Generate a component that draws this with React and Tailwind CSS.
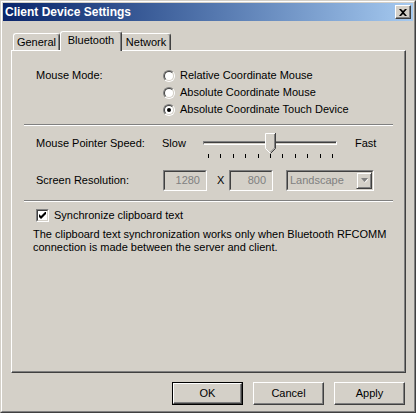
import React from "react";

function Radio({ checked }) {
  return (
    <div className="w-[12px] h-[12px] rounded-full border border-t-[#808080] border-l-[#808080] border-r-white border-b-white shrink-0">
      <div className="w-full h-full rounded-full border border-t-[#404040] border-l-[#404040] border-r-[#d4d0c8] border-b-[#d4d0c8] bg-white flex items-center justify-center">
        {checked && <div className="w-[4px] h-[4px] rounded-full bg-black" />}
      </div>
    </div>
  );
}

function Sunken({ className, children }) {
  return (
    <div className={`border border-t-[#808080] border-l-[#808080] border-r-white border-b-white ${className}`}>
      <div className="w-full h-full border border-t-[#404040] border-l-[#404040] border-r-[#d4d0c8] border-b-[#d4d0c8] flex items-center">
        {children}
      </div>
    </div>
  );
}

function Button({ label, isDefault }) {
  const inner = (
    <div className="w-full h-full border border-t-white border-l-white border-r-[#404040] border-b-[#404040] shadow-[inset_-1px_-1px_0_#808080] flex items-center justify-center">
      {label}
    </div>
  );
  return isDefault ? (
    <div className="w-[71px] h-[23px] border border-black">{inner}</div>
  ) : (
    <div className="w-[71px] h-[23px]">{inner}</div>
  );
}

export default function App() {
  const ticks = Array.from({ length: 11 });
  return (
    <div className="w-[416px] h-[413px] bg-[#d4d0c8] border border-t-[#d4d0c8] border-l-[#d4d0c8] border-r-[#404040] border-b-[#404040] font-['Liberation_Sans',Arial,sans-serif] text-[11px] text-black leading-none">
      <div className="h-full border border-t-white border-l-white border-r-[#808080] border-b-[#808080] p-[1px] flex flex-col">
        {/* Title bar */}
        <div className="h-[18px] shrink-0 flex items-center bg-gradient-to-r from-[#0a246a] to-[#a6caf0] pl-[2px] pr-[2px]">
          <span className="text-white font-bold text-[12px]">Client Device Settings</span>
          <div className="ml-auto w-[16px] h-[14px] bg-[#d4d0c8] border border-t-white border-l-white border-r-[#404040] border-b-[#404040] shadow-[inset_-1px_-1px_0_#808080] flex items-center justify-center">
            <svg width="8" height="7" viewBox="0 0 8 7">
              <path d="M0 0h2l2 2 2-2h2L5 3.5 8 7H6L4 5 2 7H0l3-3.5z" fill="#000" />
            </svg>
          </div>
        </div>

        {/* Tabs */}
        <div className="mt-[10px] ml-[10px] h-[19px] flex items-end relative z-10">
          <div className="w-[47px] h-[17px] border border-b-0 border-t-white border-l-white border-r-[#404040] shadow-[inset_-1px_0_0_#808080] rounded-t-[3px] flex items-center justify-center pt-[1px]">
            General
          </div>
          <div className="w-[62px] h-[20px] -mb-[1px] bg-[#d4d0c8] border border-b-0 border-t-white border-l-white border-r-[#404040] shadow-[inset_-1px_0_0_#808080] rounded-t-[3px] flex items-center justify-center pb-[2px]">
            Bluetooth
          </div>
          <div className="w-[49px] h-[17px] border border-b-0 border-l-0 border-t-white border-r-[#404040] shadow-[inset_-1px_0_0_#808080] rounded-tr-[3px] flex items-center justify-center pt-[1px]">
            Network
          </div>
        </div>

        {/* Panel */}
        <div className="ml-[8px] w-[395px] h-[323px] border border-t-white border-l-white border-r-[#404040] border-b-[#404040] shadow-[inset_-1px_-1px_0_#808080] flex flex-col">
          {/* Mouse mode */}
          <div className="mt-[16px] pl-[24px] flex">
            <div className="w-[127px] h-[17px] flex items-center">Mouse Mode:</div>
            <div className="flex flex-col">
              {[
                ["Relative Coordinate Mouse", false],
                ["Absolute Coordinate Mouse", false],
                ["Absolute Coordinate Touch Device", true],
              ].map(([t, c]) => (
                <div key={t} className="h-[17px] flex items-center gap-[5px]">
                  <Radio checked={c} />
                  <span>{t}</span>
                </div>
              ))}
            </div>
          </div>

          <div className="mt-[6px] ml-[12px] w-[369px] border-t border-t-[#808080] border-b border-b-white" />

          {/* Speed */}
          <div className="mt-[7px] pl-[24px] h-[20px] flex items-center">
            <div className="w-[126px]">Mouse Pointer Speed:</div>
            <div className="w-[41px]">Slow</div>
            <div className="relative w-[134px] h-[20px] flex items-center">
              <div className="w-full h-[4px] border border-t-[#808080] border-l-[#808080] border-r-white border-b-white">
                <div className="h-full border-t border-t-[#404040]" />
              </div>
              <svg className="absolute left-[62px] top-0" width="11" height="21" viewBox="0 0 11 21">
                <polygon points="0,0 11,0 11,15.5 5.5,21 0,15.5" fill="#d4d0c8" />
                <polyline points="0.5,15.5 0.5,0.5 10.5,0.5" fill="none" stroke="#fff" />
                <polyline points="0.5,15.5 5.5,20.5" fill="none" stroke="#fff" />
                <polyline points="10.5,0 10.5,15.5 5.5,20.5" fill="none" stroke="#404040" />
                <polyline points="9.5,1 9.5,15 5.5,19" fill="none" stroke="#808080" />
              </svg>
            </div>
            <div className="ml-[18px]">Fast</div>
          </div>
          <div className="mt-[1px] ml-[196px] w-[125px] h-[4px] flex justify-between">
            {ticks.map((_, i) => (
              <div key={i} className="w-[1px] h-full bg-black" />
            ))}
          </div>

          {/* Resolution */}
          <div className="mt-[12px] pl-[24px] h-[21px] flex items-center">
            <div className="w-[127px]">Screen Resolution:</div>
            <Sunken className="w-[44px] h-[21px]">
              <span className="ml-auto pr-[5px] text-[#808080]">1280</span>
            </Sunken>
            <div className="w-[22px] pl-[10px]">X</div>
            <Sunken className="w-[44px] h-[21px]">
              <span className="ml-auto pr-[5px] text-[#808080]">800</span>
            </Sunken>
            <Sunken className="ml-[13px] w-[88px] h-[21px]">
              <span className="pl-[2px] text-[#808080]">Landscape</span>
              <div className="ml-auto w-[16px] h-[17px] border border-t-[#d4d0c8] border-l-[#d4d0c8] border-r-[#404040] border-b-[#404040] shadow-[inset_1px_1px_0_#fff,inset_-1px_-1px_0_#808080] flex items-center justify-center">
                <svg width="7" height="5" viewBox="0 0 7 5">
                  <polygon points="0,0 7,0 3.5,4" fill="#808080" />
                  <polyline points="4,4.5 7.5,0.5" fill="none" stroke="#fff" />
                </svg>
              </div>
            </Sunken>
          </div>

          <div className="mt-[9px] ml-[12px] w-[369px] border-t border-t-[#808080] border-b border-b-white" />

          {/* Clipboard */}
          <div className="mt-[7px] pl-[24px] h-[13px] flex items-center gap-[5px]">
            <div className="w-[13px] h-[13px] border border-t-[#808080] border-l-[#808080] border-r-white border-b-white shrink-0">
              <div className="w-full h-full border border-t-[#404040] border-l-[#404040] border-r-[#d4d0c8] border-b-[#d4d0c8] bg-white flex items-center justify-center">
                <svg width="7" height="7" viewBox="0 0 7 7">
                  <path d="M0 2v3l2 2L7 2V-1L2 4z" fill="#000" />
                </svg>
              </div>
            </div>
            <span>Synchronize clipboard text</span>
          </div>
          <div className="mt-[6px] pl-[21px] leading-[13px]">
            The clipboard text synchronization works only when Bluetooth RFCOMM
            <br />
            connection is made between the server and client.
          </div>
        </div>

        {/* Buttons */}
        <div className="mt-[9px] pr-[8px] flex justify-end gap-[10px]">
          <Button label="OK" isDefault />
          <Button label="Cancel" />
          <Button label="Apply" />
        </div>
      </div>
    </div>
  );
}
